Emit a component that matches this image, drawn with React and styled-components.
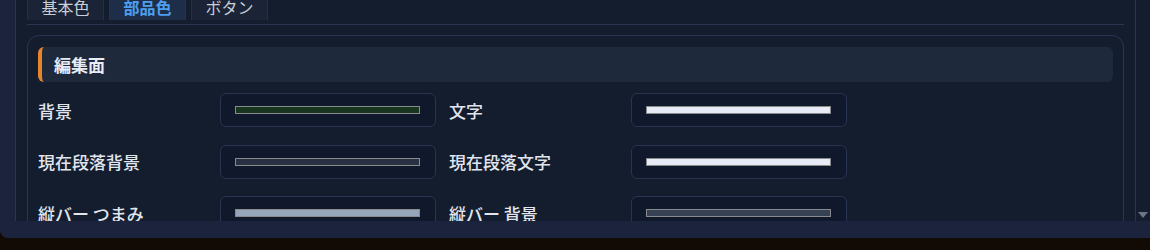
import React, { useLayoutEffect, useRef } from 'react'
import styled, { createGlobalStyle } from 'styled-components'

const GlobalStyle = createGlobalStyle`
    html, body {
        margin: 0;
        padding: 0;
        background: #120a05;
        overflow: hidden;
    }
    body {
        font-family: "Noto Sans CJK JP", "Noto Sans", sans-serif;
    }
`

const Dialog = styled.div`
    height: 238px;
    box-sizing: border-box;
    padding: 0 0 17px 15px;
    background: #1b243c;
    border-bottom-left-radius: 8px;
    display: flex;
    flex-direction: column;
`

const ScrollArea = styled.div`
    flex: 1;
    min-height: 0;
    display: flex;
    background: #141d2e;
    border-left: 1px solid #2a3650;
`

const Viewport = styled.div`
    flex: 1;
    min-width: 0;
    overflow: hidden;
`

const Content = styled.div`
    padding: 12px 11px 20px;
`

const ScrollBar = styled.div`
    width: 14px;
    border-left: 1px solid #2a3650;
    display: flex;
    flex-direction: column;
    justify-content: flex-end;
    align-items: center;
    padding-bottom: 3px;
`

const Arrow = styled.div`
    width: 0;
    height: 0;
    border-left: 5px solid transparent;
    border-right: 5px solid transparent;
    border-top: 6px solid #6b7487;
`

const TabBar = styled.div`
    display: flex;
    gap: 5px;
    padding-bottom: 4px;
    border-bottom: 1px solid #2a3650;
`

const Tab = styled.div`
    box-sizing: border-box;
    width: 77px;
    padding: 10px 0 3px;
    white-space: nowrap;
    line-height: 20px;
    font-size: 16px;
    text-align: center;
    border: 1px solid ${p => (p.$active ? '#24334d' : '#243046')};
    border-bottom: none;
    background: ${p => (p.$active ? '#1f2e48' : '#1b2436')};
    color: ${p => (p.$active ? '#4d9ff0' : '#c9cfd9')};
    font-weight: ${p => (p.$active ? 700 : 400)};
`

const Card = styled.div`
    margin-top: 10px;
    border: 1px solid #2a3650;
    border-radius: 12px;
    padding: 11px 10px 20px;
`

const SectionHeader = styled.div`
    height: 35px;
    display: flex;
    align-items: center;
    padding-left: 12px;
    background: #1e293b;
    border-left: 4px solid #e8852b;
    border-radius: 6px;
    font-size: 17px;
    font-weight: 700;
    color: #e8edf5;
`

const FieldGrid = styled.div`
    margin-top: 11px;
    display: grid;
    grid-template-columns: 398px 398px;
    column-gap: 13px;
    row-gap: 17.5px;
`

const Field = styled.div`
    display: flex;
    align-items: center;
`

const Label = styled.span`
    width: 182px;
    flex-shrink: 0;
    font-size: 17px;
    font-weight: 500;
    color: #e1e6ee;
    white-space: nowrap;
`

const ColorBox = styled.div`
    width: 216px;
    height: 34px;
    box-sizing: border-box;
    padding: 0 15px 0 14px;
    display: flex;
    align-items: center;
    background: #0f192b;
    border: 1px solid #283551;
    border-radius: 6px;
`

const Swatch = styled.div`
    flex: 1;
    height: 6px;
    background: ${p => p.$color};
    border: 1px solid #888a8c;
`

const fields = [
    { label: '背景', color: '#17351f' },
    { label: '文字', color: '#e6ebf6' },
    { label: '現在段落背景', color: '#283142' },
    { label: '現在段落文字', color: '#e6ebf6' },
    { label: '縦バー つまみ', color: '#97a5bb' },
    { label: '縦バー 背景', color: '#364253' },
]

export default function App() {
    const viewRef = useRef(null)

    useLayoutEffect(() => {
        if (viewRef.current) viewRef.current.scrollTop = 26
    }, [])

    return (
        <>
            <GlobalStyle />
            <Dialog>
                <ScrollArea>
                    <Viewport ref={viewRef}>
                        <Content>
                            <TabBar>
                                <Tab>基本色</Tab>
                                <Tab $active>部品色</Tab>
                                <Tab>ボタン</Tab>
                            </TabBar>
                            <Card>
                                <SectionHeader>編集面</SectionHeader>
                                <FieldGrid>
                                    {fields.map(f => (
                                        <Field key={f.label}>
                                            <Label>{f.label}</Label>
                                            <ColorBox>
                                                <Swatch $color={f.color} />
                                            </ColorBox>
                                        </Field>
                                    ))}
                                </FieldGrid>
                            </Card>
                        </Content>
                    </Viewport>
                    <ScrollBar>
                        <Arrow />
                    </ScrollBar>
                </ScrollArea>
            </Dialog>
        </>
    )
}
